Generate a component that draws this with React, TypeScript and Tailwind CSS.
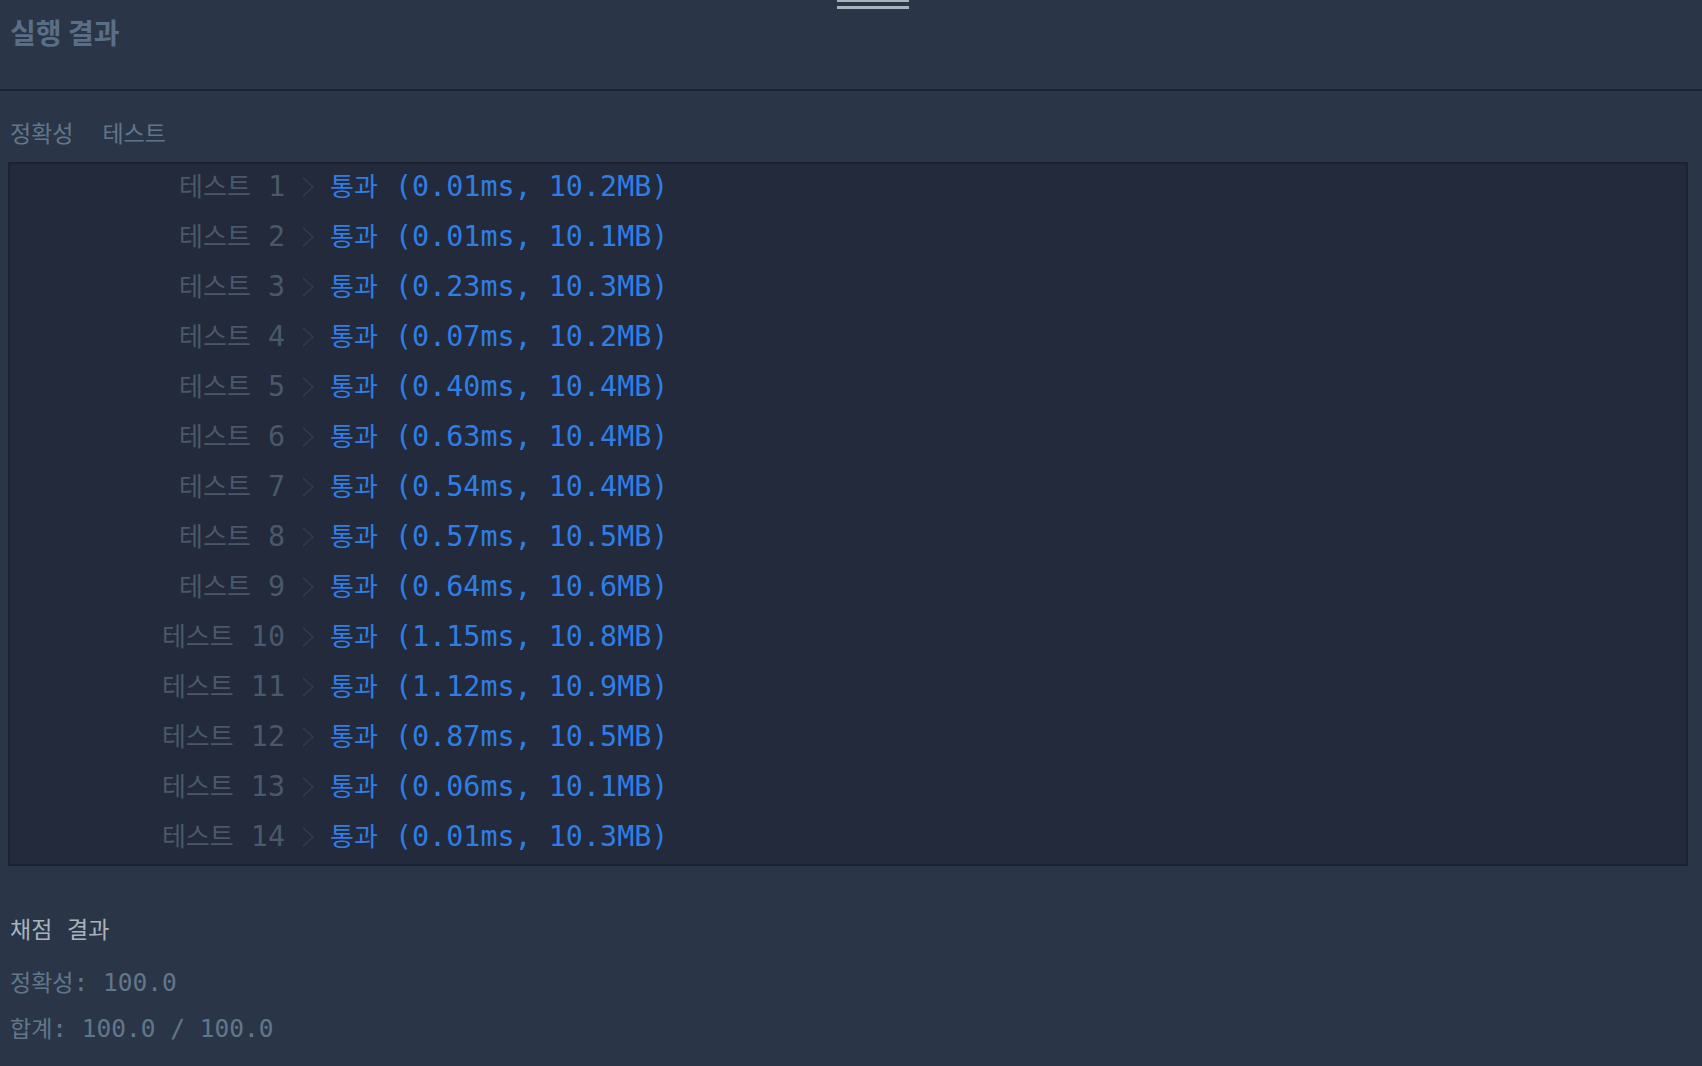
import React from 'react';

const rows: { n: number; time: string; mem: string }[] = [
  { n: 1, time: '0.01', mem: '10.2' },
  { n: 2, time: '0.01', mem: '10.1' },
  { n: 3, time: '0.23', mem: '10.3' },
  { n: 4, time: '0.07', mem: '10.2' },
  { n: 5, time: '0.40', mem: '10.4' },
  { n: 6, time: '0.63', mem: '10.4' },
  { n: 7, time: '0.54', mem: '10.4' },
  { n: 8, time: '0.57', mem: '10.5' },
  { n: 9, time: '0.64', mem: '10.6' },
  { n: 10, time: '1.15', mem: '10.8' },
  { n: 11, time: '1.12', mem: '10.9' },
  { n: 12, time: '0.87', mem: '10.5' },
  { n: 13, time: '0.06', mem: '10.1' },
  { n: 14, time: '0.01', mem: '10.3' },
];

const mono = 'font-["DejaVu_Sans_Mono","Noto_Sans_CJK_KR",monospace]';

// hangul inside the mono lines
const Ko: React.FC<{ children: React.ReactNode; big?: boolean }> = ({ children, big }) => (
  <span
    className={
      big
        ? 'font-["Noto_Sans_CJK_KR",sans-serif] text-[26px]'
        : 'font-["Noto_Sans_CJK_KR",sans-serif] text-[23px]'
    }
  >
    {children}
  </span>
);

const Chevron = () => (
  <svg width="12" height="20" viewBox="0 0 12 20" className="shrink-0">
    <polyline points="1,1 11,10 1,19" fill="none" stroke="#323e4d" strokeWidth="1.4" />
  </svg>
);

export default function App() {
  return (
    <div className={`w-[1702px] h-[1066px] overflow-hidden bg-[#2a3647] ${mono}`}>
      <div className="h-[89px] flex flex-col">
        <div className="ml-[837px] w-[72px] flex flex-col">
          <div className="h-[2px] bg-[#a7b4bd]" />
          <div className="mt-[4px] h-[3px] bg-[#a7b4bd]" />
        </div>
        <div className='mt-[6px] pl-[10px] leading-[34px] text-[28px] font-bold text-[#5a6f86] font-["Noto_Sans_CJK_KR",sans-serif]'>
          실행 결과
        </div>
      </div>
      <div className="h-[2px] bg-[#1c2431]" />

      <div className="mt-[26px] pl-[10px] leading-[30px] text-[24px] text-[#62768a] whitespace-pre">
        <Ko>정확성</Ko>
        {'  '}
        <Ko>테스트</Ko>
      </div>

      <div className="mt-[13px] ml-[8px] w-[1680px] border-2 border-[#1b2332] bg-[#222a3b]">
        {rows.map((r) => (
          <div key={r.n} className="h-[50px] pb-[4px] flex items-center text-[28.4px] whitespace-pre">
            <div className="w-[275px] shrink-0 text-right text-[#4a586a]">
              <Ko big>테스트</Ko>
              {' ' + r.n}
            </div>
            <div className="ml-[17px]">
              <Chevron />
            </div>
            <div className="ml-[16px] text-[#2f7ee6]">
              <Ko big>통과</Ko>
              {` (${r.time}ms, ${r.mem}MB)`}
            </div>
          </div>
        ))}
      </div>

      <div className="mt-[47px] pl-[10px] leading-[30px] text-[24.5px] text-[#a8b3be] whitespace-pre">
        <Ko>채점</Ko>
        {' '}
        <Ko>결과</Ko>
      </div>
      <div className="mt-[21px] pl-[10px] leading-[30px] text-[24.5px] text-[#62768a] whitespace-pre">
        <Ko>정확성</Ko>
        {': 100.0'}
      </div>
      <div className="mt-[14px] pl-[10px] leading-[30px] text-[24.5px] text-[#62768a] whitespace-pre">
        <Ko>합계</Ko>
        {': 100.0 / 100.0'}
      </div>
    </div>
  );
}
